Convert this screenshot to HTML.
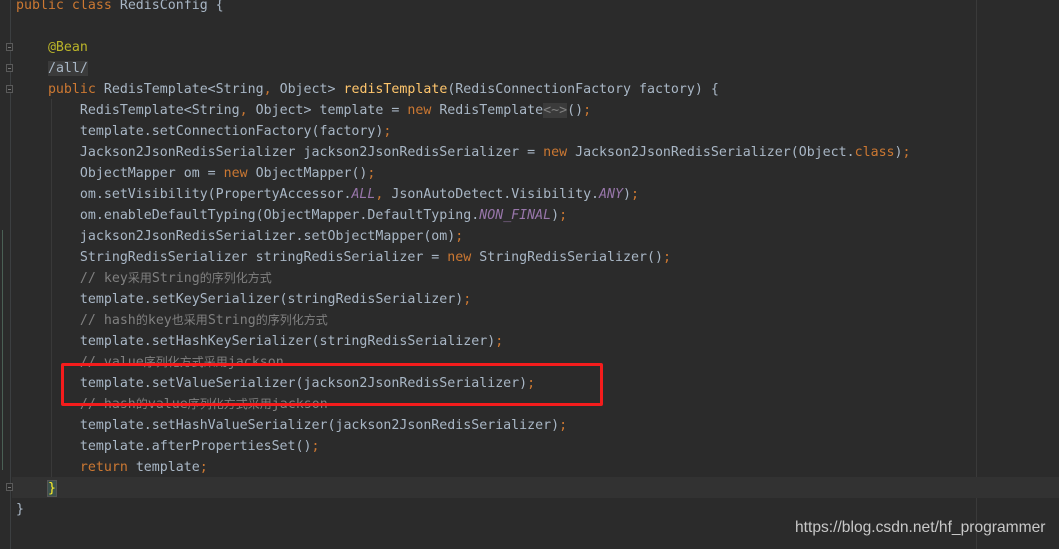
<!DOCTYPE html>
<html><head><meta charset="utf-8"><style>
body{margin:0;width:1059px;height:549px;background:#2b2b2b;overflow:hidden;position:relative;font-family:"DejaVu Sans Mono","Noto Sans CJK SC",monospace;font-size:13.28px;color:#a9b7c6}
.l{position:absolute;left:16px;height:21px;line-height:21px;white-space:pre}
.k{color:#cc7832}.a{color:#bbb529}.m{color:#ffc66d}.c{color:#808080}.p{color:#9876aa;font-style:italic}
.cj{font-family:"Noto Sans CJK SC",sans-serif;font-size:12px;line-height:1;display:inline-block;vertical-align:baseline}
.f{position:absolute;left:6px;width:7px;height:8px;border:1px solid #5a5a5a;box-sizing:border-box;background:#2b2b2b}
.f:after{content:"";position:absolute;left:1px;top:3px;width:3px;height:1px;background:#777}
</style></head><body>
<div style="position:absolute;left:10px;top:0;width:1px;height:549px;background:#3c3f41"></div>
<div style="position:absolute;left:2px;top:230px;width:1px;height:240px;background:#4a6055"></div>
<div style="position:absolute;left:976px;top:0;width:1px;height:549px;background:#3a3a3a"></div>
<div style="position:absolute;left:51px;top:99px;width:1px;height:378px;background:#393939"></div>
<div style="position:absolute;left:12px;top:477px;width:1047px;height:21px;background:#323232"></div>
<div class="f" style="top:43px"></div>
<div class="f" style="top:64px"></div>
<div class="f" style="top:85px"></div>
<div class="f" style="top:483px"></div>
<div class="l k" style="top:-5px">public class <span style="color:#a9b7c6">RedisConfig {</span></div>
<div class="l a" style="top:37px">    @Bean</div>
<div class="l" style="top:58px">    <span style="background:#3b3b3b;color:#a9b7c6">/all/</span></div>
<div class="l" style="top:79px"><span class="k">    public </span>RedisTemplate&lt;String<span class="k">, </span>Object&gt; <span class="m">redisTemplate</span>(RedisConnectionFactory factory) {</div>
<div class="l" style="top:100px">        RedisTemplate&lt;String<span class="k">, </span>Object&gt; template = <span class="k">new </span>RedisTemplate<span style="background:#3b3b3b;color:#808080">&lt;~&gt;</span>()<span class="k">;</span></div>
<div class="l" style="top:121px">        template.setConnectionFactory(factory)<span class="k">;</span></div>
<div class="l" style="top:142px">        Jackson2JsonRedisSerializer jackson2JsonRedisSerializer = <span class="k">new </span>Jackson2JsonRedisSerializer(Object.<span class="k">class</span>)<span class="k">;</span></div>
<div class="l" style="top:163px">        ObjectMapper om = <span class="k">new </span>ObjectMapper()<span class="k">;</span></div>
<div class="l" style="top:184px">        om.setVisibility(PropertyAccessor.<span class="p">ALL</span><span class="k">, </span>JsonAutoDetect.Visibility.<span class="p">ANY</span>)<span class="k">;</span></div>
<div class="l" style="top:205px">        om.enableDefaultTyping(ObjectMapper.DefaultTyping.<span class="p">NON_FINAL</span>)<span class="k">;</span></div>
<div class="l" style="top:226px">        jackson2JsonRedisSerializer.setObjectMapper(om)<span class="k">;</span></div>
<div class="l" style="top:247px">        StringRedisSerializer stringRedisSerializer = <span class="k">new </span>StringRedisSerializer()<span class="k">;</span></div>
<div class="l c" style="top:268px">        // key<span class="cj">采用</span>String<span class="cj">的序列化方式</span></div>
<div class="l" style="top:289px">        template.setKeySerializer(stringRedisSerializer)<span class="k">;</span></div>
<div class="l c" style="top:310px">        // hash<span class="cj">的</span>key<span class="cj">也采用</span>String<span class="cj">的序列化方式</span></div>
<div class="l" style="top:331px">        template.setHashKeySerializer(stringRedisSerializer)<span class="k">;</span></div>
<div class="l c" style="top:352px">        // value<span class="cj">序列化方式采用</span>jackson</div>
<div class="l" style="top:373px">        template.setValueSerializer(jackson2JsonRedisSerializer)<span class="k">;</span></div>
<div class="l c" style="top:394px">        // hash<span class="cj">的</span>value<span class="cj">序列化方式采用</span>jackson</div>
<div class="l" style="top:415px">        template.setHashValueSerializer(jackson2JsonRedisSerializer)<span class="k">;</span></div>
<div class="l" style="top:436px">        template.afterPropertiesSet()<span class="k">;</span></div>
<div class="l" style="top:457px"><span class="k">        return </span>template<span class="k">;</span></div>
<div class="l" style="top:478px">    <span style="color:#ffef28;background:#3b514d;outline:1px solid #555">}</span></div>
<div class="l" style="top:499px">}</div>
<div style="position:absolute;left:61px;top:363px;width:536px;height:37px;border:3px solid #f41c1c;border-radius:2px"></div>
<div style="position:absolute;left:795px;top:519px;font-family:'Liberation Sans',sans-serif;font-size:15.6px;color:#c8c8c8">https://blog.csdn.net/hf_programmer</div>
</body></html>
